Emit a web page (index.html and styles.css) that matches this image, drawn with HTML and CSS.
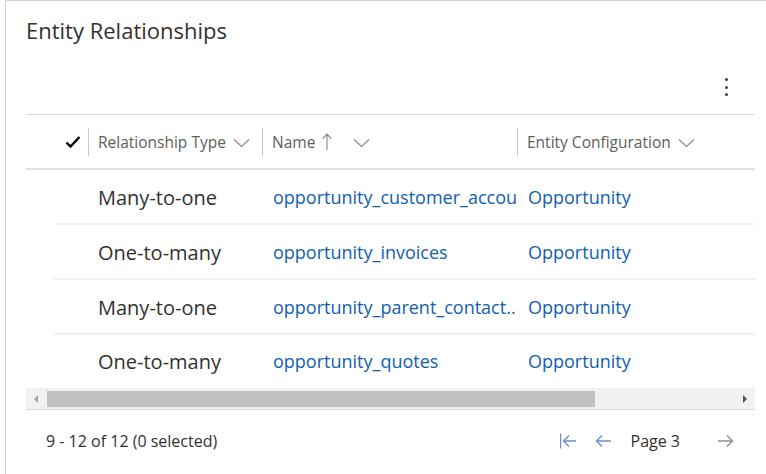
FILE: index.html
```html
<!DOCTYPE html>
<html>
<head>
<meta charset="utf-8">
<link rel="stylesheet" href="styles.css">
</head>
<body>
<div class="card">
  <h1 class="title">Entity Relationships</h1>
  <div class="toolbar">
    <span class="kebab"><i></i><i></i><i></i></span>
  </div>
  <div class="grid">
    <div class="head">
      <div class="c-check">
        <svg width="16" height="14" viewBox="0 0 16 14"><path d="M1.5 7.5 L5.5 11.5 L14.5 2" fill="none" stroke="#000" stroke-width="2.4"/></svg>
      </div>
      <div class="c-type hcell"><span>Relationship Type</span>
        <svg class="chev" width="17" height="10" viewBox="0 0 17 10"><path d="M1 1.5 L8.5 8.5 L16 1.5" fill="none" stroke="#8a8886" stroke-width="1.1"/></svg>
      </div>
      <div class="c-name hcell"><span>Name</span>
        <svg class="sort" width="10" height="18" viewBox="0 0 10 18"><path d="M5 1 V17 M0.8 5.5 L5 1 L9.2 5.5" fill="none" stroke="#8a8886" stroke-width="1.1"/></svg>
        <svg class="chev chev2" width="17" height="10" viewBox="0 0 17 10"><path d="M1 1.5 L8.5 8.5 L16 1.5" fill="none" stroke="#8a8886" stroke-width="1.1"/></svg>
      </div>
      <div class="c-ent hcell"><span>Entity Configuration</span>
        <svg class="chev" width="17" height="10" viewBox="0 0 17 10"><path d="M1 1.5 L8.5 8.5 L16 1.5" fill="none" stroke="#8a8886" stroke-width="1.1"/></svg>
      </div>
    </div>
    <div class="row">
      <div class="c-check"></div>
      <div class="c-type cell type">Many-to-one</div>
      <div class="c-name cell link">opportunity_customer_accou</div>
      <div class="c-ent cell link">Opportunity</div>
    </div>
    <div class="row">
      <div class="c-check"></div>
      <div class="c-type cell type">One-to-many</div>
      <div class="c-name cell link">opportunity_invoices</div>
      <div class="c-ent cell link">Opportunity</div>
    </div>
    <div class="row">
      <div class="c-check"></div>
      <div class="c-type cell type">Many-to-one</div>
      <div class="c-name cell link">opportunity_parent_contact..</div>
      <div class="c-ent cell link">Opportunity</div>
    </div>
    <div class="row last">
      <div class="c-check"></div>
      <div class="c-type cell type">One-to-many</div>
      <div class="c-name cell link">opportunity_quotes</div>
      <div class="c-ent cell link">Opportunity</div>
    </div>
    <div class="scrollbar">
      <div class="sb-btn"><span class="tri-left"></span></div>
      <div class="sb-thumb"></div>
      <div class="sb-space"></div>
      <div class="sb-btn"><span class="tri-right"></span></div>
    </div>
  </div>
  <div class="footer">
    <span class="count">9 - 12 of 12 (0 selected)</span>
    <div class="pager">
      <svg class="pg" width="16" height="16" viewBox="0 0 16 16"><path d="M0.6 0.5 V15.5" stroke="#7b83c9" stroke-width="1.2"/><path d="M16 8 H3.5 M9 2.5 L3.5 8 L9 13.5" fill="none" stroke="#6c8ec9" stroke-width="1.4"/></svg>
      <svg class="pg prev" width="16" height="16" viewBox="0 0 16 16"><path d="M16 8 H1.5 M7 2.5 L1.5 8 L7 13.5" fill="none" stroke="#6c8ec9" stroke-width="1.4"/></svg>
      <span class="page">Page 3</span>
      <svg class="pg next" width="16" height="16" viewBox="0 0 16 16"><path d="M0 8 H14.5 M9 2.5 L14.5 8 L9 13.5" fill="none" stroke="#8f8f8f" stroke-width="1.4"/></svg>
    </div>
  </div>
</div>
</body>
</html>
```
FILE: styles.css
```css
* { box-sizing: border-box; }
html, body { margin: 0; padding: 0; background: #fff; }
body {
  font-family: "Open Sans", "Noto Sans", sans-serif;
  color: #323130;
  width: 766px;
  height: 474px;
  overflow: hidden;
}
.card {
  margin-left: 5px;
  height: 474px;
  border-left: 1px solid #d2d2d2;
  border-top: 1px solid #d2d2d2;
  padding: 0 11px 0 20px;
}
.title {
  margin: 0;
  padding-top: 14px;
  height: 61px;
  font-size: 22px;
  font-weight: 400;
  color: #323130;
  line-height: 30px;
}
.toolbar {
  height: 53px;
  border-bottom: 1px solid #d8d8d8;
  display: flex;
  justify-content: flex-end;
  align-items: flex-start;
  padding-right: 27px;
  padding-top: 16px;
}
.kebab {
  display: flex;
  flex-direction: column;
  gap: 4.5px;
  width: 3px;
}
.kebab i {
  display: block;
  width: 3px;
  height: 3px;
  border-radius: 50%;
  background: #404040;
}
.grid { width: 729px; }
.head {
  display: flex;
  height: 55px;
  border-bottom: 2px solid #e1e1e1;
  align-items: center;
}
.c-check {
  width: 62px;
  flex: none;
  display: flex;
  justify-content: flex-end;
  padding-right: 7px;
}
.c-type { width: 174px; flex: none; }
.c-name { width: 255px; flex: none; }
.c-ent { flex: 1; min-width: 0; }
.hcell {
  display: flex;
  align-items: center;
  height: 28px;
  border-left: 1px solid #c8c6c4;
  padding-left: 9px;
  padding-top: 1px;
  font-size: 15.5px;
  color: #605e5c;
  white-space: nowrap;
}
.hcell .chev { margin-left: 7px; margin-top: 1px; flex: none; }
.sort { margin-left: 7px; margin-top: -1px; flex: none; }
.chev2 { margin-left: 21px !important; }
.row {
  display: flex;
  height: 55px;
  align-items: center;
  position: relative;
}
.row::after {
  content: "";
  position: absolute;
  left: 28px;
  right: 0;
  bottom: 0;
  height: 2px;
  background: #f0f0f0;
}
.row.last { height: 53px; }
.row.last::after { display: none; }
.cell {
  white-space: nowrap;
  overflow: hidden;
  padding-left: 10px;
  padding-bottom: 1px;
}
.type { font-size: 20px; color: #323130; }
.link { font-size: 18px; color: #1160b0; }
.c-name.cell { padding-left: 11px; }
.c-ent.cell { padding-left: 11px; }
.scrollbar {
  display: flex;
  height: 22px;
  background: #f1f1f1;
  border-bottom: 1px solid #dadada;
  align-items: center;
}
.sb-btn {
  width: 20px;
  height: 100%;
  display: flex;
  align-items: center;
  justify-content: center;
  flex: none;
}
.tri-left {
  width: 0; height: 0;
  border-top: 4px solid transparent;
  border-bottom: 4px solid transparent;
  border-right: 4px solid #a3a3a3;
}
.tri-right {
  width: 0; height: 0;
  border-top: 4px solid transparent;
  border-bottom: 4px solid transparent;
  border-left: 4px solid #505050;
}
.sb-thumb {
  width: 548px;
  height: 16px;
  background: #c1c1c1;
  margin-left: 1px;
  flex: none;
}
.sb-space { flex: 1; }
.footer {
  display: flex;
  align-items: center;
  justify-content: space-between;
  height: 62px;
  padding-left: 20px;
  padding-right: 21px;
}
.count { font-size: 16px; color: #323130; }
.pager {
  display: flex;
  align-items: center;
}
.pg { display: block; flex: none; }
.prev { margin-left: 19px; }
.page { font-size: 16px; margin-left: 20px; margin-right: 38px; color: #323130; }
```
